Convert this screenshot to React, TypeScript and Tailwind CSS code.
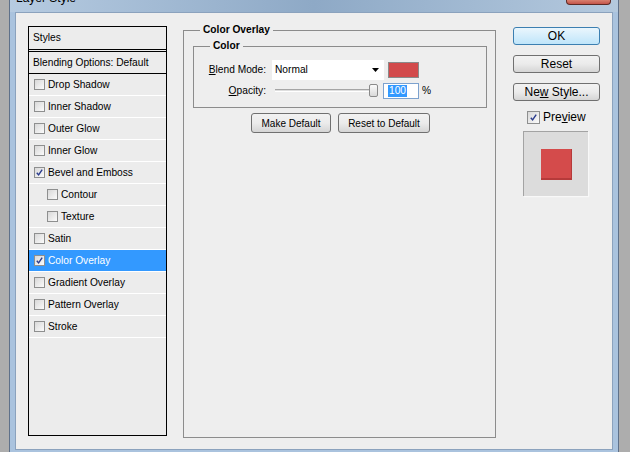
import React from 'react';

interface StyleItem {
  label: string;
  checked?: boolean;
  indent?: boolean;
  active?: boolean;
}

const styleItems: StyleItem[] = [
  { label: 'Drop Shadow' },
  { label: 'Inner Shadow' },
  { label: 'Outer Glow' },
  { label: 'Inner Glow' },
  { label: 'Bevel and Emboss', checked: true },
  { label: 'Contour', indent: true },
  { label: 'Texture', indent: true },
  { label: 'Satin' },
  { label: 'Color Overlay', checked: true, active: true },
  { label: 'Gradient Overlay' },
  { label: 'Pattern Overlay' },
  { label: 'Stroke' },
];

function CheckBox({ checked, size = 11 }: { checked?: boolean; size?: number }) {
  return (
    <span
      className={
        size === 11
          ? 'flex h-[11px] w-[11px] shrink-0 items-center justify-center border border-[#8e8f8f] bg-linear-to-br from-[#d8d8d8] to-[#fbfbfb]'
          : 'flex h-[13px] w-[13px] shrink-0 items-center justify-center border border-[#8e8f8f] bg-linear-to-br from-[#d8d8d8] to-[#fbfbfb]'
      }
    >
      {checked && (
        <svg viewBox="0 0 10 10" className="h-[9px] w-[9px]">
          <path d="M2 5.2 L4 7.6 L8 1.8" fill="none" stroke="#2b3c8d" strokeWidth="1.6" />
        </svg>
      )}
    </span>
  );
}

function GrayButton({ children, width }: { children: React.ReactNode; width: string }) {
  return (
    <div
      className={`${width} flex h-[20px] items-center justify-center rounded-[3px] border border-[#707070] bg-linear-to-b from-[#f2f2f2] via-[#ebebeb] to-[#d5d5d5] text-[10px] text-black`}
    >
      {children}
    </div>
  );
}

function SideButton({ children, primary }: { children: React.ReactNode; primary?: boolean }) {
  return (
    <div
      className={
        primary
          ? 'flex h-[18px] w-[87px] items-center justify-center rounded-[3px] border border-[#3c7fb1] bg-linear-to-b from-[#eaf6fd] to-[#bfe5fa] text-[12px] text-black'
          : 'flex h-[18px] w-[87px] items-center justify-center rounded-[3px] border border-[#707070] bg-linear-to-b from-[#f2f2f2] via-[#ebebeb] to-[#d5d5d5] text-[12px] text-black'
      }
    >
      {children}
    </div>
  );
}

export default function App() {
  return (
    <div className="flex h-[452px] w-[630px] overflow-hidden bg-[#adadad] font-['Liberation_Sans',Arial,sans-serif] text-[10.2px] text-black">
      {/* Window frame */}
      <div className="ml-[9px] flex h-[460px] w-[610px] shrink-0 flex-col border-x border-[#5f718a] bg-[#aac3de]">
        {/* Title bar */}
        <div className="flex h-[12px] shrink-0 overflow-hidden bg-linear-to-r from-[#b6cbe1] via-[#8ea9c6] to-[#b4c9de]">
          <span className="ml-[6px] mt-[-8px] text-[12px] leading-[12px] text-black">Layer Style</span>
          <span className="ml-auto mr-[7px] h-[5px] w-[45px] rounded-b-[4px] border border-t-0 border-[#5e2a25] bg-linear-to-b from-[#d8806f] to-[#c3544a]" />
        </div>

        {/* Client area */}
        <div className="mx-[5px] flex h-[438px] w-[598px] border border-[#8ba2bd] bg-[#eeeeee] pl-[12px] pt-[13px]">
          {/* Styles list */}
          <div className="flex h-[410px] w-[139px] shrink-0 flex-col border border-black bg-[#ececec]">
            <div className="flex h-[23px] items-center border-b border-black pl-[4px]">Styles</div>
            <div className="h-[1px]" />
            <div className="flex h-[23px] items-center border-y border-black pl-[4px]">
              Blending Options: Default
            </div>
            {styleItems.map((item) => (
              <div
                key={item.label}
                className={
                  item.active
                    ? 'flex h-[22px] items-center gap-[3px] border-b border-white bg-[#3399ff] pl-[5px] text-white'
                    : item.indent
                      ? 'flex h-[22px] items-center gap-[3px] border-b border-white pl-[18px]'
                      : 'flex h-[22px] items-center gap-[3px] border-b border-white pl-[5px]'
                }
              >
                <CheckBox checked={item.checked} />
                <span>{item.label}</span>
              </div>
            ))}
          </div>

          {/* Color Overlay group */}
          <div className="relative ml-[16px] mt-[4px] h-[408px] w-[313px] shrink-0 border border-[#8c8c8c] pl-[9px] pt-[15px]">
            <span className="absolute left-[16px] top-[-7px] bg-[#eeeeee] px-[3px] font-bold leading-[12px]">
              Color Overlay
            </span>

            <div className="relative h-[62px] w-[294px] border border-[#8c8c8c] pt-[13px]">
              <span className="absolute left-[16px] top-[-7px] bg-[#eeeeee] px-[3px] font-bold leading-[12px]">
                Color
              </span>

              <div className="flex h-[20px] items-center">
                <span className="w-[72px] text-right">
                  <u>B</u>lend Mode:
                </span>
                <div className="ml-[6px] flex h-[20px] w-[112px] items-center justify-between bg-white pl-[3px] pr-[5px]">
                  <span>Normal</span>
                  <svg viewBox="0 0 7 4" className="h-[4px] w-[7px]">
                    <path d="M0 0 H7 L3.5 4 Z" fill="#000" />
                  </svg>
                </div>
                <div className="ml-[4px] h-[16px] w-[31px] border border-[#8a8a8a] bg-[#d24a4b]" />
              </div>

              <div className="mt-[2px] flex h-[17px] items-center">
                <span className="w-[72px] text-right">
                  <u>O</u>pacity:
                </span>
                <div className="relative ml-[9px] h-[3px] w-[103px] border-t border-[#a5a5a5] border-b border-b-white bg-[#dedede]">
                  <span className="absolute left-[94px] top-[-6px] h-[13px] w-[9px] rounded-[2px] border border-[#8a8a8a] bg-linear-to-b from-[#fbfbfb] to-[#d9d9d9]" />
                </div>
                <div className="ml-[5px] flex h-[16px] w-[36px] items-center border border-[#7da2ce] bg-white pl-[4px]">
                  <span className="bg-[#3399ff] px-[1px] leading-[12px] text-white">100</span>
                </div>
                <span className="ml-[3px]">%</span>
              </div>
            </div>

            <div className="ml-[58px] mt-[5px] flex gap-[7px]">
              <GrayButton width="w-[80px]">Make Default</GrayButton>
              <GrayButton width="w-[92px]">Reset to Default</GrayButton>
            </div>
          </div>

          {/* Right column */}
          <div className="ml-[17px] mt-[1px] flex w-[87px] shrink-0 flex-col">
            <SideButton primary>OK</SideButton>
            <div className="mt-[10px]">
              <SideButton>Reset</SideButton>
            </div>
            <div className="mt-[10px]">
              <SideButton>
                Ne<u>w</u>&nbsp;Style...
              </SideButton>
            </div>
            <div className="ml-[14px] mt-[9px] flex h-[14px] items-center gap-[3px] text-[12px]">
              <CheckBox checked size={13} />
              <span>
                Pre<u>v</u>iew
              </span>
            </div>
            <div className="ml-[10px] mt-[7px] flex h-[65px] w-[65px] items-center justify-center border-l border-t border-[#a3a3a3] bg-[#dcdcdc] shadow-[1px_1px_1px_#f8f8f8]">
              <div className="h-[31px] w-[31px] border-b-2 border-r border-[#b63a3a] bg-[#d44b4b]" />
            </div>
          </div>
        </div>
      </div>
    </div>
  );
}
